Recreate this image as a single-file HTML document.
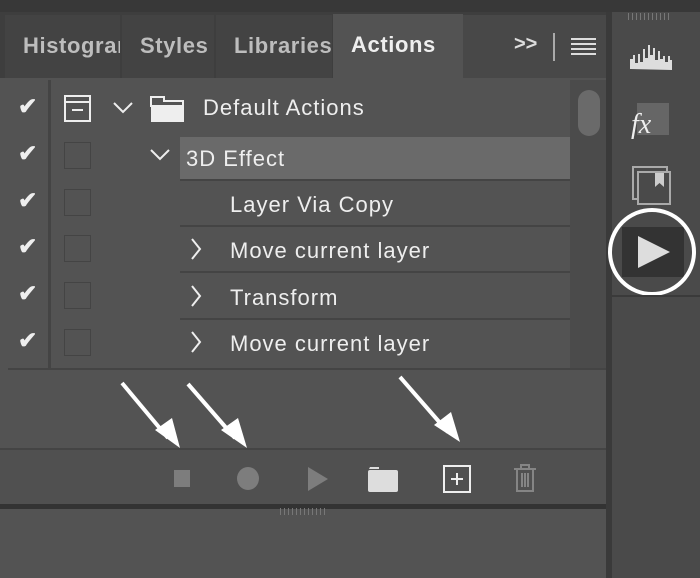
<!DOCTYPE html>
<html><head><style>
*{margin:0;padding:0;box-sizing:border-box}
body{width:700px;height:578px;background:#535353;position:relative;overflow:hidden;font-family:"Liberation Sans",sans-serif}
.a{position:absolute}
.tab{position:absolute;top:15px;height:63px;background:#434343;color:#bdbdbd;font-weight:bold;font-size:22px;letter-spacing:0.6px;line-height:62px;padding-left:18px;overflow:hidden;white-space:nowrap}
.row{position:absolute;left:180px;width:390px;height:44px;border-bottom:2px solid #444;color:#eee;font-size:22px;letter-spacing:1px;line-height:44px;white-space:nowrap}
.chk{position:absolute;left:18px;color:#eee;font-size:23px;font-weight:bold}
.box{position:absolute;left:64px;width:27px;height:27px;border:1px solid #444}
</style></head><body>
<div class="a" style="left:0;top:0;width:700px;height:12px;background:#383838"></div>
<div class="a" style="left:0;top:12px;width:606px;height:66px;background:#3e3e3e"></div>
<div class="tab" style="left:5px;width:115px">Histogram</div>
<div class="tab" style="left:122px;width:92px">Styles</div>
<div class="tab" style="left:216px;width:116px">Libraries</div>
<div class="tab" style="left:333px;width:130px;background:#535353;color:#eee;top:14px;height:64px">Actions</div>
<div class="a" style="left:463px;top:15px;width:143px;height:63px;background:#484848"></div>
<div class="a" style="left:514px;top:33px;color:#ddd;font-size:20px;font-weight:bold">&gt;&gt;</div>
<div class="a" style="left:553px;top:33px;width:2px;height:28px;background:#aaa"></div>
<svg class="a" style="left:571px;top:37px" width="26" height="18"><g stroke="#ddd" stroke-width="2"><line x1="0" y1="2" x2="25" y2="2"/><line x1="0" y1="7" x2="25" y2="7"/><line x1="0" y1="12" x2="25" y2="12"/><line x1="0" y1="17" x2="25" y2="17"/></g></svg>
<div class="a" style="left:48px;top:80px;width:3px;height:290px;background:#444"></div>
<div class="a" style="left:8px;top:368px;width:598px;height:2px;background:#444"></div>
<div class="a" style="left:606px;top:12px;width:6px;height:566px;background:#3a3a3a"></div>
<div class="chk" style="top:93px">✔</div><div class="chk" style="top:140px">✔</div><div class="chk" style="top:187px">✔</div><div class="chk" style="top:233px">✔</div><div class="chk" style="top:280px">✔</div><div class="chk" style="top:327px">✔</div>
<svg class="a" style="left:64px;top:95px" width="28" height="28"><rect x="1" y="1" width="25" height="25" fill="none" stroke="#eee" stroke-width="2"/><line x1="1" y1="7" x2="26" y2="7" stroke="#eee" stroke-width="2"/><line x1="8" y1="15" x2="19" y2="15" stroke="#eee" stroke-width="2"/></svg>
<div class="box" style="top:142px"></div><div class="box" style="top:189px"></div><div class="box" style="top:235px"></div><div class="box" style="top:282px"></div><div class="box" style="top:329px"></div>
<svg class="a" style="left:113px;top:102px" width="20" height="12"><path d="M1 1L10 10L19 1" fill="none" stroke="#eee" stroke-width="2"/></svg>
<svg class="a" style="left:150px;top:95px" width="35" height="28"><path d="M1 2h13v4h19v5H1z" fill="none" stroke="#eee" stroke-width="2"/><rect x="1" y="12" width="33" height="15" fill="#eee"/></svg>
<div class="a" style="left:203px;top:95px;color:#eee;font-size:22px;letter-spacing:1px">Default Actions</div>
<div class="row" style="top:137px;background:#6a6a6a;padding-left:6px">3D Effect</div>
<svg class="a" style="left:150px;top:149px" width="20" height="12"><path d="M1 1L10 10L19 1" fill="none" stroke="#eee" stroke-width="2"/></svg>
<div class="row" style="top:183px;padding-left:50px">Layer Via Copy</div>
<div class="row" style="top:229px;padding-left:50px">Move current layer</div>
<div class="row" style="top:276px;padding-left:50px">Transform</div>
<div class="row" style="top:322px;padding-left:50px;border-bottom:none">Move current layer</div>
<svg class="a" style="left:190px;top:238px" width="12" height="22"><path d="M2 1L10 11L2 21" fill="none" stroke="#eee" stroke-width="2"/></svg>
<svg class="a" style="left:190px;top:285px" width="12" height="22"><path d="M2 1L10 11L2 21" fill="none" stroke="#eee" stroke-width="2"/></svg>
<svg class="a" style="left:190px;top:331px" width="12" height="22"><path d="M2 1L10 11L2 21" fill="none" stroke="#eee" stroke-width="2"/></svg>
<div class="a" style="left:570px;top:80px;width:36px;height:288px;background:#4b4b4b"></div>
<div class="a" style="left:578px;top:90px;width:22px;height:46px;border-radius:11px;background:#6a6a6a"></div>
<div class="a" style="left:0;top:448px;width:606px;height:2px;background:#444"></div>
<div class="a" style="left:0;top:450px;width:606px;height:54px;background:#505050"></div>
<div class="a" style="left:0;top:504px;width:606px;height:5px;background:#333"></div>
<div class="a" style="left:174px;top:470px;width:16px;height:17px;background:#7d7d7d"></div>
<div class="a" style="left:237px;top:467px;width:22px;height:23px;border-radius:50%;background:#7d7d7d"></div>
<svg class="a" style="left:308px;top:467px" width="20" height="24"><path d="M0 0L20 12L0 24z" fill="#7d7d7d"/></svg>
<svg class="a" style="left:368px;top:465px" width="32" height="28"><path d="M1 4h10v-2h-9z" fill="#ddd"/><rect x="0" y="5" width="30" height="22" rx="2" fill="#ddd"/></svg>
<svg class="a" style="left:443px;top:465px" width="28" height="29"><rect x="1" y="1" width="26" height="26" fill="none" stroke="#eee" stroke-width="2"/><path d="M14 8v12M8 14h12" stroke="#eee" stroke-width="2"/></svg>
<svg class="a" style="left:513px;top:463px" width="24" height="30"><g fill="none" stroke="#858585" stroke-width="2"><path d="M1 6h22M8 6V2h8v4M4 6v22h16V6M9 10v14M12 10v14M15 10v14"/></g></svg>
<svg class="a" style="left:0;top:370px" width="606" height="80"><g stroke="#fff" stroke-width="4"><line x1="122" y1="13" x2="168" y2="68"/><line x1="188" y1="14" x2="235" y2="68"/><line x1="400" y1="7" x2="448" y2="62"/></g><g fill="#fff"><path d="M180 78L155 60L172 48z"/><path d="M247 78L221 60L238 48z"/><path d="M460 72L434 55L451 42z"/></g></svg>
<div class="a" style="left:280px;top:508px;width:45px;height:7px;background:repeating-linear-gradient(90deg,#777 0 1px,transparent 1px 4px)"></div>
<div class="a" style="left:612px;top:12px;width:88px;height:566px;background:#4a4a4a"></div>
<div class="a" style="left:628px;top:13px;width:44px;height:7px;background:repeating-linear-gradient(90deg,#777 0 1px,transparent 1px 4px)"></div>
<svg class="a" style="left:630px;top:45px" width="46" height="25"><path d="M0 24V14h3v-4h2v8h3V9h2v8h3V4h2v9h3V0h2v10h3V3h2v12h3V6h2v8h3V11h2v6h3v-6h2v4h2v10z" fill="#ddd"/></svg>
<div class="a" style="left:637px;top:103px;width:32px;height:32px;background:#666"></div>
<div class="a" style="left:631px;top:109px;color:#eee;font-size:28px;font-style:italic;font-family:'Liberation Serif',serif">fx</div>
<svg class="a" style="left:632px;top:166px" width="40" height="40"><rect x="1" y="1" width="34" height="32" fill="none" stroke="#aaa" stroke-width="2"/><rect x="6" y="6" width="32" height="32" fill="#4a4a4a" stroke="#aaa" stroke-width="2"/><path d="M23 7h9v14l-4.5-4-4.5 4z" fill="#ccc"/></svg>
<div class="a" style="left:622px;top:227px;width:62px;height:50px;background:#333"></div>
<svg class="a" style="left:638px;top:236px" width="32" height="32"><path d="M0 0L32 16L0 32z" fill="#ddd"/></svg>
<div class="a" style="left:608px;top:208px;width:88px;height:88px;border-radius:50%;border:4px solid #fff"></div>
<div class="a" style="left:612px;top:295px;width:88px;height:2px;background:#3a3a3a"></div>
</body></html>
